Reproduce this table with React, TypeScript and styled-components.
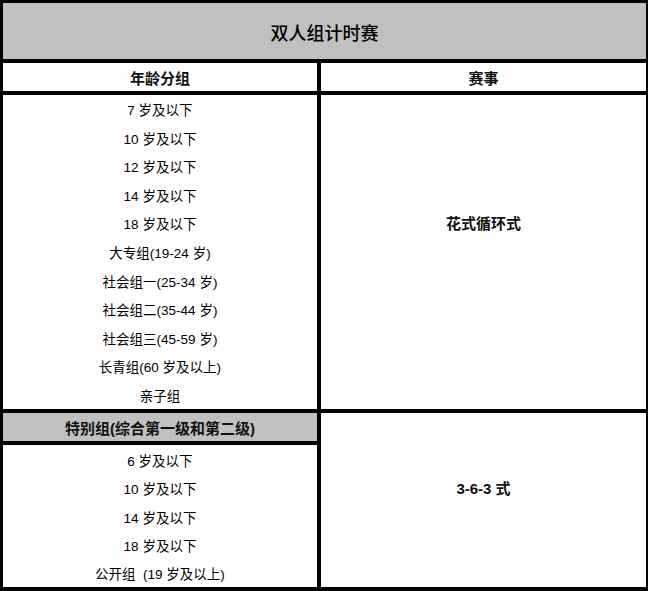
import React from 'react';
import styled, { createGlobalStyle } from 'styled-components';

const GlobalStyle = createGlobalStyle`
  html, body {
    margin: 0;
    padding: 0;
    background: #ffffff;
  }
  body {
    font-family: "Liberation Sans", "Noto Sans CJK SC", sans-serif;
    color: #111111;
  }
`;

const Table = styled.div`
  width: 648px;
  height: 591px;
  box-sizing: border-box;
  background: #000000;
  padding: 3px 2px 4px 3px;
  display: grid;
  grid-template-columns: 314px 325px;
  grid-template-rows: 56px 28px 314px 28px 142px;
  gap: 4px;
`;

const Cell = styled.div<{ $gray?: boolean; $span?: number; $rows?: number }>`
  background: ${(p) => (p.$gray ? '#c0c0c0' : '#ffffff')};
  grid-column: ${(p) => (p.$span ? `span ${p.$span}` : 'auto')};
  grid-row: ${(p) => (p.$rows ? `span ${p.$rows}` : 'auto')};
  display: flex;
  align-items: center;
  justify-content: center;
  box-sizing: border-box;
`;

const Title = styled.span`
  font-size: 18px;
  font-weight: 500;
  padding-top: 2px;
  color: #000000;
`;

const HeadText = styled.span`
  font-size: 15px;
  font-weight: 700;
`;

const EventText = styled.span<{ $lift: number }>`
  font-size: 15px;
  font-weight: 700;
  margin-bottom: ${(p) => p.$lift}px;
`;

const List = styled.div<{ $top?: number }>`
  background: #ffffff;
  display: flex;
  flex-direction: column;
  padding-top: ${(p) => p.$top ?? 0}px;
`;

const Row = styled.div`
  height: 28.6px;
  display: flex;
  align-items: center;
  justify-content: center;
  font-size: 13.5px;
  color: #000000;
  white-space: pre;
`;

const groupA = [
  '7 岁及以下',
  '10 岁及以下',
  '12 岁及以下',
  '14 岁及以下',
  '18 岁及以下',
  '大专组(19-24 岁)',
  '社会组一(25-34 岁)',
  '社会组二(35-44 岁)',
  '社会组三(45-59 岁)',
  '长青组(60 岁及以上)',
  '亲子组',
];

const groupB = ['6 岁及以下', '10 岁及以下', '14 岁及以下', '18 岁及以下', '公开组  (19 岁及以上)'];

export default function App() {
  return (
    <>
      <GlobalStyle />
      <Table>
        <Cell $gray $span={2}>
          <Title>双人组计时赛</Title>
        </Cell>
        <Cell>
          <HeadText>年龄分组</HeadText>
        </Cell>
        <Cell>
          <HeadText>赛事</HeadText>
        </Cell>

        <List>
          {groupA.map((t) => (
            <Row key={t}>{t}</Row>
          ))}
        </List>
        <Cell>
          <EventText $lift={60}>花式循环式</EventText>
        </Cell>

        <Cell $gray>
          <HeadText>特别组(综合第一级和第二级)</HeadText>
        </Cell>
        <Cell $rows={2}>
          <EventText $lift={26}>3-6-3 式</EventText>
        </Cell>
        <List $top={1}>
          {groupB.map((t) => (
            <Row key={t}>{t}</Row>
          ))}
        </List>
      </Table>
    </>
  );
}
